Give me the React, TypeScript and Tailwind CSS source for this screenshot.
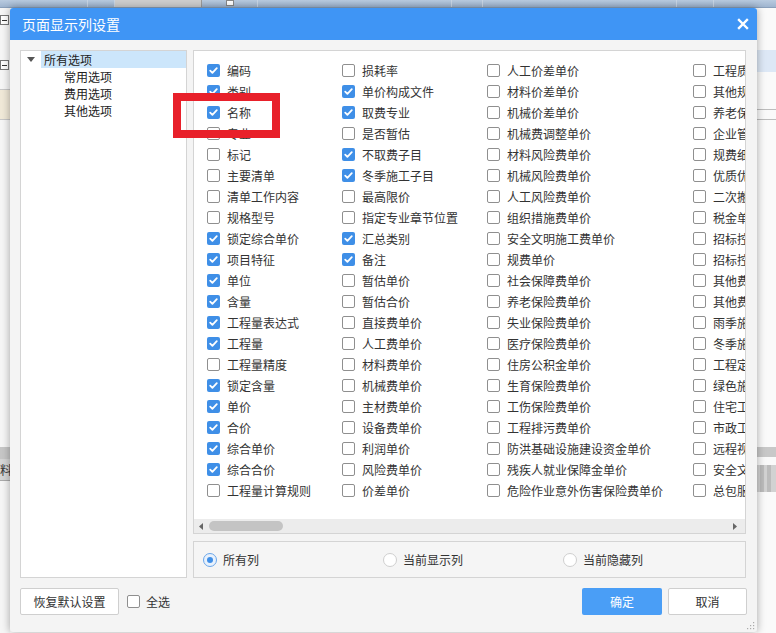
import React from "react";

type Item = [string, boolean];

const col1: Item[] = [
  ["编码", true],
  ["类别", true],
  ["名称", true],
  ["专业", false],
  ["标记", false],
  ["主要清单", false],
  ["清单工作内容", false],
  ["规格型号", false],
  ["锁定综合单价", true],
  ["项目特征", true],
  ["单位", true],
  ["含量", true],
  ["工程量表达式", true],
  ["工程量", true],
  ["工程量精度", false],
  ["锁定含量", true],
  ["单价", true],
  ["合价", true],
  ["综合单价", true],
  ["综合合价", true],
  ["工程量计算规则", false],
];

const col2: Item[] = [
  ["损耗率", false],
  ["单价构成文件", true],
  ["取费专业", true],
  ["是否暂估", false],
  ["不取费子目", true],
  ["冬季施工子目", true],
  ["最高限价", false],
  ["指定专业章节位置", false],
  ["汇总类别", true],
  ["备注", true],
  ["暂估单价", false],
  ["暂估合价", false],
  ["直接费单价", false],
  ["人工费单价", false],
  ["材料费单价", false],
  ["机械费单价", false],
  ["主材费单价", false],
  ["设备费单价", false],
  ["利润单价", false],
  ["风险费单价", false],
  ["价差单价", false],
];

const col3: Item[] = [
  "人工价差单价",
  "材料价差单价",
  "机械价差单价",
  "机械费调整单价",
  "材料风险费单价",
  "机械风险费单价",
  "人工风险费单价",
  "组织措施费单价",
  "安全文明施工费单价",
  "规费单价",
  "社会保障费单价",
  "养老保险费单价",
  "失业保险费单价",
  "医疗保险费单价",
  "住房公积金单价",
  "生育保险费单价",
  "工伤保险费单价",
  "工程排污费单价",
  "防洪基础设施建设资金单价",
  "残疾人就业保障金单价",
  "危险作业意外伤害保险费单价",
].map((t) => [t, false] as Item);

const col4: Item[] = [
  "工程质量检测费单价",
  "其他规费单价",
  "养老保险统筹单价",
  "企业管理费单价",
  "规费细项单价",
  "优质优价费单价",
  "二次搬运费单价",
  "税金单价",
  "招标控制价单价",
  "招标控制价合价",
  "其他费用单价",
  "其他费用合价",
  "雨季施工费单价",
  "冬季施工费单价",
  "工程定位复测费单价",
  "绿色施工费单价",
  "住宅工程分户验收费单价",
  "市政工程单价",
  "远程视频监控费单价",
  "安全文明施工费单价",
  "总包服务费单价",
].map((t) => [t, false] as Item);

const Check = ({ on }: { on: boolean }) =>
  on ? (
    <span className="w-[13px] h-[13px] rounded-[2px] bg-[#3f8fe7] flex items-center justify-center shrink-0">
      <svg width="11" height="11" viewBox="0 0 11 11" fill="none">
        <path d="M2.2 5.6l2.2 2.2 4.4-4.6" stroke="#fff" strokeWidth="1.8" strokeLinecap="round" strokeLinejoin="round" />
      </svg>
    </span>
  ) : (
    <span className="w-[13px] h-[13px] rounded-[2px] border border-[#8f8f8f] bg-white shrink-0" />
  );

const Column = ({ items, w }: { items: Item[]; w: string }) => (
  <div className={`flex flex-col shrink-0 ${w}`}>
    {items.map(([label, on]) => (
      <div key={label} className="flex items-center h-[21px] whitespace-nowrap">
        <Check on={on} />
        <span className="ml-[7px] text-[12px] text-[#333]">{label}</span>
      </div>
    ))}
  </div>
);

const Radio = ({ on, label }: { on: boolean; label: string }) => (
  <div className="flex items-center w-[180px] shrink-0">
    {on ? (
      <span className="w-[14px] h-[14px] rounded-full border border-[#6aa6ea] bg-[#e8f1fc] flex items-center justify-center">
        <span className="w-[6px] h-[6px] rounded-full bg-[#3f8fe7]" />
      </span>
    ) : (
      <span className="w-[14px] h-[14px] rounded-full border border-[#cfcfcf] bg-white" />
    )}
    <span className="ml-[6px] text-[12px] text-[#333]">{label}</span>
  </div>
);

const Minus = () => (
  <span className="w-[9px] h-[10px] border border-[#777] bg-white flex items-center justify-center">
    <span className="w-[5px] h-px bg-[#333]" />
  </span>
);

export default function App() {
  return (
    <div
      className="relative w-[776px] h-[633px] overflow-hidden bg-white"
      style={{ fontFamily: '"Noto Sans CJK SC", "Noto Sans", sans-serif' }}
    >
      {/* the application behind the dialog */}
      <div className="flex flex-col w-full h-full">
        <div className="h-[8px] flex bg-gradient-to-b from-[#b9cbe0] to-[#9fb5cf] border-b border-[#8aa0bb]">
          <div className="w-[88px] border-r border-[#c9d6e6]" />
          <div className="w-[27px] border-r border-[#c9d6e6]" />
          <div className="w-[87px] bg-[#cfcfcf] border-r border-[#9a9a9a]" />
          <div className="w-[24px]" />
          <div className="w-[8px] h-[6px] bg-white border border-[#888]" />
          <div className="w-[24px] border-r border-[#c9d6e6]" />
          <div className="w-[194px] border-r border-[#c9d6e6]" />
          <div className="w-[31px] border-r border-[#c9d6e6]" />
          <div className="w-[194px] border-r border-[#c9d6e6]" />
          <div className="w-[37px] border-r border-[#c9d6e6]" />
        </div>
        <div className="flex-1 flex justify-between">
          <div className="w-[10px] flex flex-col bg-[#f6f6f6]">
            <div className="h-[7px]" />
            <Minus />
            <div className="h-[35px]" />
            <Minus />
            <div className="h-[20px] border-b border-[#c8c8c8]" />
            <div className="h-[30px] border-b border-[#c8c8c8] bg-[#f0e9d8]" />
            <div className="h-[327px]" />
            <div className="h-[12px] bg-[#c6c6c6]" />
            <div className="h-[22px] bg-[#d6d6d6] border-b border-[#aaa] text-[12px] leading-[22px] text-[#333] overflow-hidden">
              料
            </div>
          </div>
          <div className="w-[19px] flex flex-col bg-[#fafafa]">
            <div className="h-[42px]" />
            <div className="h-[22px] bg-[#dde8f6]" />
            <div className="h-[38px] border-b border-[#bdbdbd]" />
            <div className="h-[10px] border-b border-[#bdbdbd]" />
            <div className="h-[327px]" />
            <div className="h-[10px] bg-[#c8c8c8]" />
            <div className="h-[8px]" />
            <div className="h-[27px] bg-[#d2d2d2] flex gap-[3px] px-[3px]">
              <div className="w-[4px] bg-[#bcbcbc]" />
              <div className="w-[4px] bg-[#bcbcbc]" />
            </div>
          </div>
        </div>
      </div>

      {/* dialog */}
      <div className="absolute left-[10px] top-[8px] w-[747px] h-[624px] flex flex-col bg-[#f4f4f4] rounded-[3px] shadow-[0_0_8px_rgba(0,0,0,0.35)]">
        <div className="h-[32px] shrink-0 flex items-center justify-between bg-[#3f95f5] rounded-t-[3px] pl-[12px] pr-[8px]">
          <span className="text-[14px] text-white">页面显示列设置</span>
          <svg width="12" height="12" viewBox="0 0 12 12">
            <path d="M2 2l8 8M10 2l-8 8" stroke="#fff" strokeWidth="2.4" strokeLinecap="square" />
          </svg>
        </div>

        <div className="flex pt-[10px] pl-[10px] pr-[11px] gap-[6px]">
          {/* tree */}
          <div className="w-[167px] h-[528px] border border-[#d4d4d4] bg-white flex flex-col">
            <div className="flex h-[17px] items-center">
              <div className="w-[20px] flex justify-center">
                <svg width="8" height="5" viewBox="0 0 8 5">
                  <path d="M0 0h8L4 5z" fill="#555" />
                </svg>
              </div>
              <div className="flex-1 h-full bg-[#cce6fb] pl-[3px] flex items-center text-[12px] text-[#222]">
                所有选项
              </div>
            </div>
            {["常用选项", "费用选项", "其他选项"].map((t) => (
              <div key={t} className="h-[17px] pl-[43px] flex items-center text-[12px] text-[#222]">
                {t}
              </div>
            ))}
          </div>

          {/* right side */}
          <div className="w-[553px] flex flex-col gap-[7px]">
            <div className="h-[484px] border border-[#d4d4d4] bg-white flex flex-col overflow-hidden">
              <div className="flex pl-[13px] pt-[9px] flex-1 overflow-hidden">
                <Column items={col1} w="w-[135px]" />
                <Column items={col2} w="w-[145px]" />
                <Column items={col3} w="w-[206px]" />
                <Column items={col4} w="w-[120px]" />
              </div>
              <div className="h-[14px] shrink-0 bg-[#ececec] flex items-center px-[5px]">
                <svg width="4" height="7" viewBox="0 0 4 7">
                  <path d="M4 0v7L0 3.5z" fill="#666" />
                </svg>
                <div className="ml-[6px] w-[74px] h-[10px] rounded-full bg-[#c4c4c4]" />
                <div className="flex-1" />
                <svg width="4" height="7" viewBox="0 0 4 7">
                  <path d="M0 0v7L4 3.5z" fill="#666" />
                </svg>
                <div className="w-[3px]" />
              </div>
            </div>
            <div className="h-[37px] border border-[#d4d4d4] bg-[#f5f5f5] flex items-center pl-[9px]">
              <Radio on label="所有列" />
              <Radio on={false} label="当前显示列" />
              <Radio on={false} label="当前隐藏列" />
            </div>
          </div>
        </div>

        <div className="flex items-center mt-[10px] pl-[10px] pr-[10px]">
          <button className="w-[99px] h-[27px] border border-[#cfcfcf] bg-white rounded-[2px] text-[12px] text-[#333]">
            恢复默认设置
          </button>
          <div className="ml-[8px] flex items-center">
            <Check on={false} />
            <span className="ml-[6px] text-[12px] text-[#333]">全选</span>
          </div>
          <div className="flex-1" />
          <button className="w-[80px] h-[27px] bg-[#4a9ef6] rounded-[2px] text-[12px] text-white">确定</button>
          <button className="ml-[6px] w-[79px] h-[27px] border border-[#cfcfcf] bg-white rounded-[2px] text-[12px] text-[#333]">
            取消
          </button>
        </div>

        <svg className="absolute right-[2px] bottom-[2px]" width="8" height="8" viewBox="0 0 8 8">
          <rect x="6" y="0" width="1.2" height="1.2" fill="#aaa" />
          <rect x="3" y="3" width="1.2" height="1.2" fill="#aaa" />
          <rect x="6" y="3" width="1.2" height="1.2" fill="#aaa" />
          <rect x="0" y="6" width="1.2" height="1.2" fill="#aaa" />
          <rect x="3" y="6" width="1.2" height="1.2" fill="#aaa" />
          <rect x="6" y="6" width="1.2" height="1.2" fill="#aaa" />
        </svg>
      </div>

      {/* red highlight box */}
      <div className="absolute left-[173px] top-[93px] w-[107px] h-[45px] border-[8px] border-[#e8202a]" />
    </div>
  );
}
